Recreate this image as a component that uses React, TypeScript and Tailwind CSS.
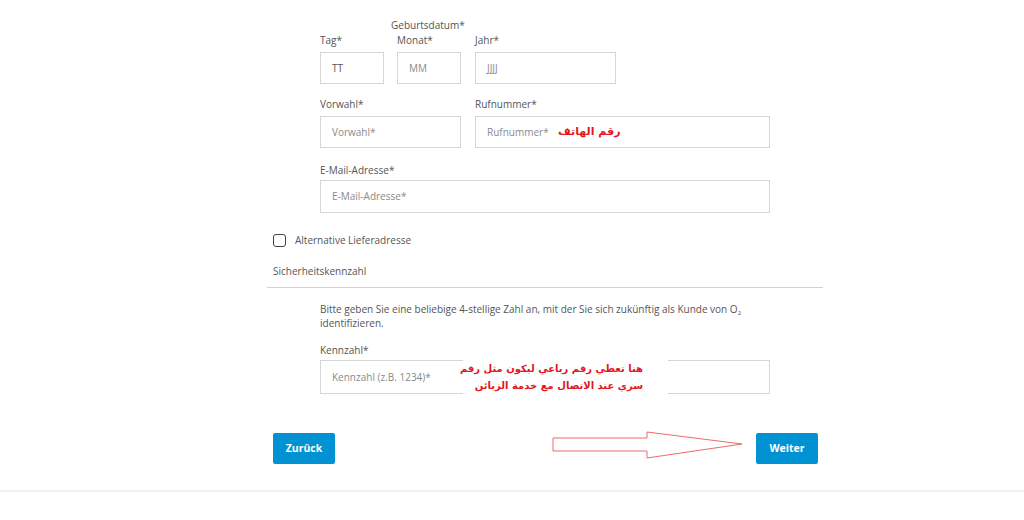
import React from "react";

const font = { fontFamily: "'Open Sans', 'Liberation Sans', sans-serif" };

interface FieldProps {
  label: string;
  placeholder: string;
  width: string;
  dark?: boolean;
  gap?: string;
  height?: string;
  children?: React.ReactNode;
}

const Field: React.FC<FieldProps> = (props) => (
  <div className={`flex flex-col ${props.width}`}>
    <div className="text-[10px] leading-[14px] h-[14px] text-[#555]">{props.label}</div>
    <div
      className={`relative ${props.gap ?? "mt-[5px]"} ${props.height ?? "h-[32px]"} border border-[#d6d6d6] bg-white flex items-center px-[11px] text-[10px] ${
        props.dark ? "text-[#555]" : "text-[#8a8a8a]"
      }`}
    >
      {props.placeholder}
      {props.children}
    </div>
  </div>
);

const arabic = { fontFamily: "'DejaVu Sans', sans-serif" };

export default function App() {
  return (
    <div className="relative w-[1024px] h-[520px] bg-white overflow-hidden" style={font}>
      <div className="ml-[267px] w-[556px] pt-[18px]">
        <div className="pl-[53px]">
          <div className="ml-[71px] text-[10px] leading-[14px] h-[14px] text-[#555]">Geburtsdatum*</div>
          <div className="flex gap-[13px] mt-[1px]">
            <Field label="Tag*" placeholder="TT" width="w-[64px]" dark />
            <Field label="Monat*" placeholder="MM" width="w-[64px]" />
            <div className="ml-[1px]">
              <Field label="Jahr*" placeholder="JJJJ" width="w-[141px]" />
            </div>
          </div>

          <div className="flex gap-[14px] mt-[13px]">
            <Field label="Vorwahl*" placeholder="Vorwahl*" width="w-[141px]" />
            <Field label="Rufnummer*" placeholder="Rufnummer*" width="w-[295px]">
              <span
                className="absolute left-[82px] top-[7px] whitespace-nowrap text-[11px] font-bold text-[#e3161e]"
                style={arabic}
                dir="rtl"
              >
                رقم الهاتف
              </span>
            </Field>
          </div>

          <div className="flex mt-[15px]">
            <Field
              label="E-Mail-Adresse*"
              placeholder="E-Mail-Adresse*"
              width="w-[450px]"
              gap="mt-[3px]"
              height="h-[33px]"
            />
          </div>
        </div>

        <div className="flex items-center gap-[9px] mt-[21px] pl-[6px] h-[13px]">
          <div className="w-[13px] h-[13px] border border-[#444] rounded-[3px]" />
          <span className="text-[10px] text-[#555]">Alternative Lieferadresse</span>
        </div>

        <div className="mt-[17px] pl-[6px] text-[10px] leading-[14px] h-[14px] text-[#555]">
          Sicherheitskennzahl
        </div>
        <div className="mt-[9px] border-t border-[#b3dcf5]" />

        <div className="pl-[53px]">
          <p className="mt-[14px] w-[450px] text-[10px] leading-[14px] text-[#555]">
            Bitte geben Sie eine beliebige 4-stellige Zahl an, mit der Sie sich zukünftig als Kunde von O
            <sub className="text-[6px]">2</sub> identifizieren.
          </p>
          <div className="relative mt-[13px] flex">
            <Field
              label="Kennzahl*"
              placeholder="Kennzahl (z.B. 1234)*"
              width="w-[450px]"
              gap="mt-[3px]"
              height="h-[34px]"
            />
            <div
              className="absolute left-[143px] top-[14px] w-[205px] h-[39px] bg-white flex flex-col items-end justify-center pr-[25px] whitespace-nowrap text-[10px] leading-[17px] font-bold text-[#e3161e]"
              style={arabic}
            >
              <span dir="rtl">هنا تعطي رقم رباعي ليكون مثل رقم</span>
              <span dir="rtl">سري عند الاتصال مع خدمة الزبائن</span>
            </div>
          </div>
        </div>

        <div className="relative flex justify-between mt-[39px] pl-[6px] pr-[5px]">
          <button className="w-[62px] h-[31px] rounded-[2px] bg-[#0092d2] text-white text-[10.5px] font-bold">
            Zurück
          </button>
          <svg
            className="absolute left-[285px] top-[-2px]"
            width="192"
            height="30"
            viewBox="0 0 192 30"
          >
            <path
              d="M1 7 L95 7 L95 1 L190 13 L95 27 L95 20 L1 20 Z"
              fill="white"
              stroke="#f06a6a"
              strokeWidth="1"
            />
          </svg>
          <button className="w-[62px] h-[31px] rounded-[2px] bg-[#0092d2] text-white text-[10.5px] font-bold">
            Weiter
          </button>
        </div>
      </div>

      <div className="mt-[26px] border-t-2 border-[#f0f0f0]" />
    </div>
  );
}
